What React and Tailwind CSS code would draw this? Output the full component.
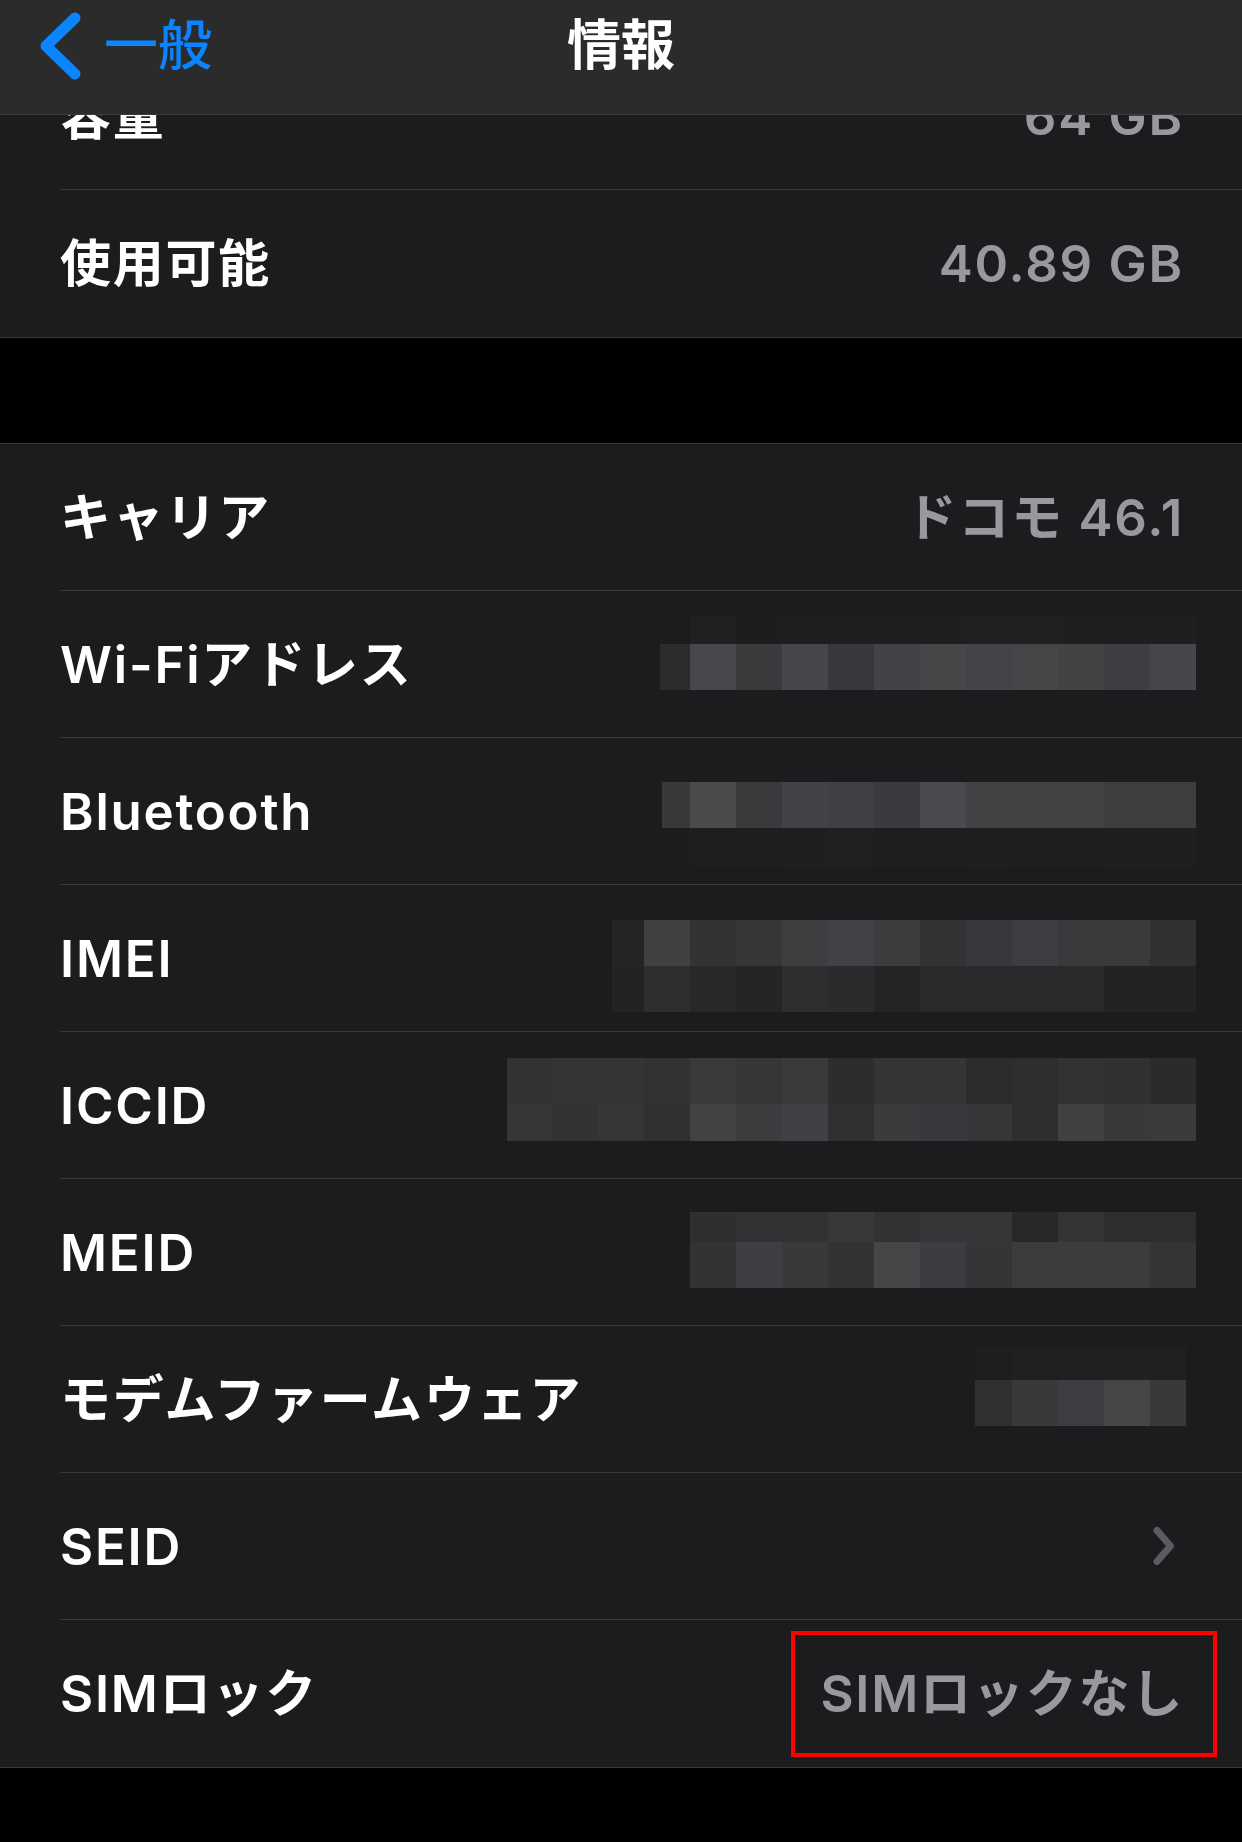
import React from "react";

// repeated 46px mosaic column
const cols = (first, n) => [first, ...Array(n).fill("w-[46px]")];

const MOSAICS = {
  wifi: {
    pos: "mt-[24px] mr-[46px]",
    widths: cols("w-[30px]", 11),
    rows: [
      {
        h: "h-[29px]",
        c: ["bg-[#1c1c1e]", "bg-[#202022]", "bg-[#1d1d1f]", "bg-[#1e1e20]", "bg-[#1f1f21]", "bg-[#1f1f21]", "bg-[#1f1f21]", "bg-[#202022]", "bg-[#202022]", "bg-[#1f1f21]", "bg-[#1f1f21]", "bg-[#1f1f21]"],
      },
      {
        h: "h-[46px]",
        c: ["bg-[#2c2c2e]", "bg-[#48474c]", "bg-[#3a3a3c]", "bg-[#47464b]", "bg-[#38373c]", "bg-[#434247]", "bg-[#474749]", "bg-[#444348]", "bg-[#464648]", "bg-[#434345]", "bg-[#3f3e43]", "bg-[#47464b]"],
      },
    ],
  },
  bluetooth: {
    pos: "mt-[44px] mr-[46px]",
    widths: cols("w-[28px]", 11),
    rows: [
      {
        h: "h-[46px]",
        c: ["bg-[#39393b]", "bg-[#4b4b4d]", "bg-[#3a3a3c]", "bg-[#434246]", "bg-[#403f44]", "bg-[#3b3a3f]", "bg-[#4a494e]", "bg-[#424244]", "bg-[#424244]", "bg-[#424244]", "bg-[#3e3e40]", "bg-[#3e3e40]"],
      },
      {
        h: "h-[39px]",
        c: ["bg-[#1d1d1f]", "bg-[#1e1e20]", "bg-[#1e1e20]", "bg-[#1f1f21]", "bg-[#202022]", "bg-[#1e1e20]", "bg-[#1e1e20]", "bg-[#1f1f21]", "bg-[#1e1e20]", "bg-[#1e1e20]", "bg-[#1f1f21]", "bg-[#1f1f21]"],
      },
    ],
  },
  imei: {
    pos: "mt-[35px] mr-[46px]",
    widths: cols("w-[32px]", 12),
    rows: [
      {
        h: "h-[46px]",
        c: ["bg-[#252527]", "bg-[#414144]", "bg-[#333335]", "bg-[#363638]", "bg-[#3e3e40]", "bg-[#424145]", "bg-[#3c3c3e]", "bg-[#333335]", "bg-[#38373b]", "bg-[#3e3d42]", "bg-[#3a3a3c]", "bg-[#3a3a3c]", "bg-[#313133]"],
      },
      {
        h: "h-[46px]",
        c: ["bg-[#232325]", "bg-[#2e2e30]", "bg-[#28282a]", "bg-[#252527]", "bg-[#2e2e30]", "bg-[#2b2b2d]", "bg-[#242426]", "bg-[#2a2a2c]", "bg-[#2a2a2c]", "bg-[#2a2a2c]", "bg-[#2a2a2c]", "bg-[#232325]", "bg-[#232325]"],
      },
    ],
  },
  iccid: {
    pos: "mt-[26px] mr-[46px]",
    widths: cols("w-[45px]", 14),
    rows: [
      {
        h: "h-[46px]",
        c: ["bg-[#323234]", "bg-[#343436]", "bg-[#343436]", "bg-[#323234]", "bg-[#3a3a3c]", "bg-[#363638]", "bg-[#3a3a3c]", "bg-[#2d2d2f]", "bg-[#353537]", "bg-[#353537]", "bg-[#2c2c2e]", "bg-[#2e2e30]", "bg-[#323234]", "bg-[#313133]", "bg-[#2b2b2d]"],
      },
      {
        h: "h-[37px]",
        c: ["bg-[#363638]", "bg-[#333335]", "bg-[#363638]", "bg-[#303032]", "bg-[#424244]", "bg-[#3d3d3f]", "bg-[#414044]", "bg-[#303032]", "bg-[#3b3b3d]", "bg-[#38373b]", "bg-[#363638]", "bg-[#2e2e30]", "bg-[#414143]", "bg-[#39393b]", "bg-[#3b3b3d]"],
      },
    ],
  },
  meid: {
    pos: "mt-[33px] mr-[46px]",
    widths: cols("w-[46px]", 10),
    rows: [
      {
        h: "h-[30px]",
        c: ["bg-[#2f2f31]", "bg-[#323234]", "bg-[#323234]", "bg-[#38383a]", "bg-[#323234]", "bg-[#363638]", "bg-[#363638]", "bg-[#28282a]", "bg-[#343436]", "bg-[#2e2e30]", "bg-[#2e2e30]"],
      },
      {
        h: "h-[46px]",
        c: ["bg-[#333335]", "bg-[#3f3e43]", "bg-[#39393b]", "bg-[#333335]", "bg-[#464648]", "bg-[#3d3c41]", "bg-[#353537]", "bg-[#3c3c3e]", "bg-[#3c3c3e]", "bg-[#3c3c3e]", "bg-[#343436]"],
      },
    ],
  },
  modem: {
    pos: "mt-[21px] mr-[56px]",
    widths: ["w-[37px]", "w-[46px]", "w-[46px]", "w-[46px]", "w-[36px]"],
    rows: [
      {
        h: "h-[33px]",
        c: ["bg-[#1e1e20]", "bg-[#202022]", "bg-[#202022]", "bg-[#202022]", "bg-[#202022]"],
      },
      {
        h: "h-[46px]",
        c: ["bg-[#303032]", "bg-[#39393b]", "bg-[#3e3d42]", "bg-[#464648]", "bg-[#39393b]"],
      },
    ],
  },
};

const Mosaic = ({ data }) => (
  <div className={`ml-auto self-start ${data.pos}`}>
    {data.rows.map((row, r) => (
      <div key={r} className="flex">
        {data.widths.map((w, i) => (
          <div key={i} className={`${w} ${row.h} ${row.c[i]}`} />
        ))}
      </div>
    ))}
  </div>
);

const Chevron = () => (
  <svg width="26" height="42" viewBox="0 0 26 42" className="ml-auto mr-[65px] self-center" fill="none">
    <path d="M6 5.5 L19.5 21 L6 36.5" stroke="#5b5b60" strokeWidth="7" strokeLinecap="round" strokeLinejoin="round" />
  </svg>
);

const Row = ({ label, value, mosaic, chevron, last, children }) => (
  <div className="relative bg-[#1c1c1e] pl-[60px]">
    <div className={`flex h-[147px] ${last ? "" : "border-b border-[#38383a]"}`}>
      <span className="self-center text-white">{label}</span>
      {value && <span className="ml-auto mr-[58px] self-center text-[#98989f]">{value}</span>}
      {mosaic && <Mosaic data={mosaic} />}
      {chevron && <Chevron />}
    </div>
    {children}
  </div>
);

export default function App() {
  return (
    <div className="relative min-h-[1842px] w-full overflow-hidden bg-black font-['Inter','Noto_Sans_CJK_JP',sans-serif] text-[51px] font-semibold leading-none tracking-[0.035em]">
      <main className="pt-[43px]">
        <section className="border-b border-[#38383a]">
          <Row label="容量" value="64 GB" />
          <Row label="使用可能" value="40.89 GB" last />
        </section>

        <section className="mt-[105px] border-y border-[#38383a]">
          <Row label="キャリア" value="ドコモ 46.1" />
          <Row label="Wi-Fiアドレス" mosaic={MOSAICS.wifi} />
          <Row label="Bluetooth" mosaic={MOSAICS.bluetooth} />
          <Row label="IMEI" mosaic={MOSAICS.imei} />
          <Row label="ICCID" mosaic={MOSAICS.iccid} />
          <Row label="MEID" mosaic={MOSAICS.meid} />
          <Row label="モデムファームウェア" mosaic={MOSAICS.modem} />
          <Row label="SEID" chevron />
          <Row label="SIMロック" value="SIMロックなし" last>
            {/* red annotation box */}
            <div className="absolute top-[11px] right-[25px] h-[126px] w-[426px] border-4 border-[#ff0000]" />
          </Row>
        </section>
      </main>

      <header className="absolute inset-x-0 top-0 h-[115px] border-b border-[#3a3a3a] bg-[#2b2b2b] tracking-normal">
        <div className="grid h-[91px] grid-cols-[1fr_auto_1fr] items-center">
          <div className="flex items-center pl-[38px] text-[54px] font-medium text-[#0a84ff]">
            <svg width="44" height="72" viewBox="0 0 44 72" fill="none">
              <path d="M37 8 L8 36 L37 64" stroke="#0a84ff" strokeWidth="11" strokeLinecap="round" strokeLinejoin="round" />
            </svg>
            <span className="ml-[22px]">一般</span>
          </div>
          <h1 className="text-[54px] font-bold text-white">情報</h1>
          <div />
        </div>
      </header>
    </div>
  );
}
